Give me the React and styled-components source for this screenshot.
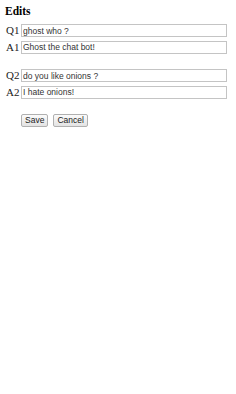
import React, { useState } from "react";
import styled, { createGlobalStyle } from "styled-components";

const GlobalStyle = createGlobalStyle`
  body {
    margin: 0;
    background: #ffffff;
    font-family: "Liberation Serif", "Times New Roman", serif;
  }
`;

const initialPairs = [
  { id: 1, q: "ghost who ?", a: "Ghost the chat bot!" },
  { id: 2, q: "do you like onions ?", a: "I hate onions!" },
];

export default function App() {
  const [pairs, setPairs] = useState(initialPairs);

  const update = (id, key, value) => {
    setPairs((prev) =>
      prev.map((p) => (p.id === id ? { ...p, [key]: value } : p))
    );
  };

  return (
    <>
      <GlobalStyle />
      <Page>
        <Title>Edits</Title>
        {pairs.map((pair) => (
          <Pair key={pair.id}>
            <Row>
              <Label>Q{pair.id}</Label>
              <Field
                value={pair.q}
                onChange={(e) => update(pair.id, "q", e.target.value)}
              />
            </Row>
            <Row>
              <Label>A{pair.id}</Label>
              <Field
                value={pair.a}
                onChange={(e) => update(pair.id, "a", e.target.value)}
              />
            </Row>
          </Pair>
        ))}
        <Actions>
          <Button>Save</Button>
          <Button onClick={() => setPairs(initialPairs)}>Cancel</Button>
        </Actions>
      </Page>
    </>
  );
}

const Page = styled.main`
  padding: 4px 9px 0 5px;
`;

const Title = styled.h3`
  margin: 0 0 6px;
  font-size: 11.5px;
  font-weight: 700;
  line-height: 14px;
  color: #000;
`;

const Pair = styled.div`
  display: flex;
  flex-direction: column;
  gap: 3.5px;
  margin-bottom: 15.5px;
`;

const Row = styled.div`
  display: grid;
  grid-template-columns: 16px 1fr;
  align-items: center;
  height: 13px;
`;

const Label = styled.span`
  font-size: 11px;
  line-height: 13px;
  padding-left: 1px;
  color: #222;
`;

const Field = styled.input`
  box-sizing: border-box;
  height: 13px;
  width: 100%;
  margin: 0;
  padding: 0 1px;
  border: 1px solid #c4c4c4;
  font-family: "Liberation Sans", Arial, sans-serif;
  font-size: 8.5px;
  color: #333;
  background: #fff;
  outline: none;
`;

const Actions = styled.div`
  display: flex;
  gap: 5px;
  padding-left: 16px;
`;

const Button = styled.button`
  box-sizing: border-box;
  height: 13px;
  padding: 0 3px;
  border: 1px solid #b0b0b0;
  border-radius: 2px;
  background: linear-gradient(#fbfbfb, #e3e3e3);
  font-family: "Liberation Sans", Arial, sans-serif;
  font-size: 8.5px;
  line-height: 11px;
  color: #222;
`;
